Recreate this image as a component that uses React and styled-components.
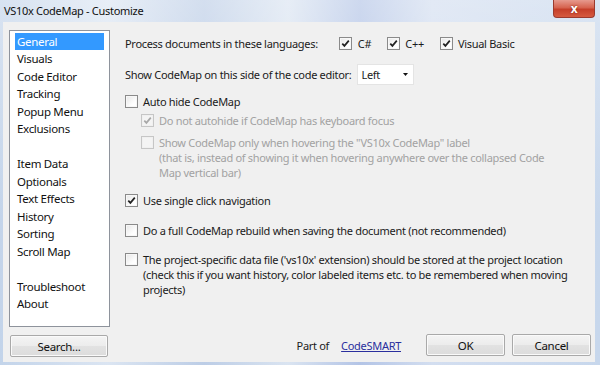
import React from 'react';
import styled, { createGlobalStyle } from 'styled-components';

const GlobalStyle = createGlobalStyle`
  html, body {
    margin: 0;
    padding: 0;
  }
  body {
    width: 600px;
    height: 365px;
    overflow: hidden;
    font-family: "Noto Sans", "Segoe UI", sans-serif;
    font-size: 11px;
    letter-spacing: -0.3px;
    color: #1b1b1b;
  }
`;

const Window = styled.div`
  width: 600px;
  height: 365px;
  box-sizing: border-box;
  display: flex;
  flex-direction: column;
  padding: 0 5px 3px 3px;
  background:
    linear-gradient(180deg, rgba(255, 255, 255, 0.35) 0%, rgba(255, 255, 255, 0) 60%),
    linear-gradient(90deg, #c3d4ea 0%, #dbe5f2 18%, #bccde6 34%, #dae4f1 48%, #b3c4e6 60%, #d3def0 72%, #c7d7ec 100%);
`;

const TitleBar = styled.div`
  height: 22px;
  display: flex;
  align-items: flex-start;
`;

const Title = styled.div`
  padding: 3px 0 0 1px;
  font-size: 11px;
  letter-spacing: -0.3px;
  color: #111;
`;

const CloseButton = styled.div`
  margin-left: auto;
  width: 42px;
  height: 18px;
  box-sizing: border-box;
  display: flex;
  align-items: center;
  justify-content: center;
  border: 1px solid #9b3a2e;
  border-top: none;
  border-radius: 0 0 4px 4px;
  background: linear-gradient(180deg, #e69a8e 0%, #d6634f 45%, #c53f2a 55%, #d65a40 100%);
  color: #fff;
  font-weight: bold;
  font-size: 12px;
  text-shadow: 0 0 2px #7a1a10;
`;

const Client = styled.div`
  flex: 1;
  display: flex;
  background: #f0f0f0;
`;

const Sidebar = styled.div`
  display: flex;
  flex-direction: column;
  padding: 8px 0 0 6px;
`;

const ListBox = styled.div`
  width: 101px;
  height: 297px;
  box-sizing: border-box;
  border: 1px solid #8e939c;
  background: #fff;
  padding: 1.5px 5px;
`;

const ListItem = styled.div`
  height: 17.5px;
  line-height: 17px;
  padding-left: 2px;
  font-size: 11.5px;
  color: ${(p) => (p.$selected ? '#fff' : '#111')};
  background: ${(p) => (p.$selected ? '#3399ff' : 'transparent')};
`;

const Button = styled.div`
  width: ${(p) => p.$width || 79}px;
  height: 22px;
  box-sizing: border-box;
  display: flex;
  align-items: center;
  justify-content: center;
  border: 1px solid #a9a9a9;
  border-radius: 2px;
  background: linear-gradient(180deg, #f4f4f4 0%, #ececec 50%, #e2e2e2 51%, #dcdcdc 100%);
  box-shadow: inset 0 0 0 1px #fafafa;
  font-size: 11.5px;
  color: #111;
`;

const SearchButton = styled(Button)`
  margin: 8px 0 0 1px;
`;

const Main = styled.div`
  flex: 1;
  display: flex;
  flex-direction: column;
  padding: 14px 4px 6px 15px;
`;

const Row = styled.div`
  display: flex;
  align-items: ${(p) => (p.$center ? 'center' : 'flex-start')};
  margin-top: ${(p) => p.$mt || 0}px;
  padding-left: ${(p) => p.$indent || 0}px;
  color: ${(p) => (p.$disabled ? '#a2a2a2' : 'inherit')};
`;

const Text = styled.div`
  line-height: 15px;
  white-space: nowrap;
  margin-left: ${(p) => p.$ml || 0}px;
  margin-right: ${(p) => p.$mr || 0}px;
`;

const Box = styled.span`
  flex: none;
  width: 13px;
  height: 13px;
  margin-top: 1px;
  box-sizing: border-box;
  display: flex;
  align-items: center;
  justify-content: center;
  border: 1px solid ${(p) => (p.$disabled ? '#c6c6c6' : '#8a8a8a')};
  background: ${(p) => (p.$disabled ? '#f4f4f4' : 'linear-gradient(135deg, #e6e6e6 0%, #ffffff 70%)')};
  box-shadow: inset 0 0 0 1px ${(p) => (p.$disabled ? '#f0f0f0' : '#f7f7f7')};
`;

const Option = styled.div`
  display: flex;
  align-items: flex-start;
  margin-right: ${(p) => p.$mr || 0}px;
`;

const Select = styled.div`
  width: 57px;
  height: 21px;
  box-sizing: border-box;
  display: flex;
  align-items: center;
  justify-content: space-between;
  padding: 0 5px 0 3px;
  background: #fff;
  border: 1px solid #e4e4e4;
`;

const Footer = styled.div`
  margin-top: auto;
  display: flex;
  align-items: center;
  justify-content: flex-end;
`;

const Link = styled.span`
  margin-left: 12px;
  color: #2a2f9e;
  text-decoration: underline;
`;

const FooterButton = styled(Button)`
  margin-left: ${(p) => p.$ml || 0}px;
`;

const Checkbox = ({ checked, disabled }) => (
  <Box $disabled={disabled}>
    {checked && (
      <svg width="9" height="9" viewBox="0 0 9 9">
        <path
          d="M1.3 4.6 L3.4 6.9 L7.8 1.6"
          fill="none"
          stroke={disabled ? '#a8a8a8' : '#222'}
          strokeWidth="1.7"
        />
      </svg>
    )}
  </Box>
);

const items = [
  'General', 'Visuals', 'Code Editor', 'Tracking', 'Popup Menu', 'Exclusions', '',
  'Item Data', 'Optionals', 'Text Effects', 'History', 'Sorting', 'Scroll Map', '',
  'Troubleshoot', 'About',
];

const App = () => (
  <Window>
    <GlobalStyle />
    <TitleBar>
      <Title>VS10x CodeMap - Customize</Title>
      <CloseButton>x</CloseButton>
    </TitleBar>
    <Client>
      <Sidebar>
        <ListBox>
          {items.map((item, i) => (
            <ListItem key={i} $selected={i === 0}>{item}</ListItem>
          ))}
        </ListBox>
        <SearchButton $width={98}>Search...</SearchButton>
      </Sidebar>

      <Main>
        <Row>
          <Text $mr={21}>Process documents in these languages:</Text>
          <Option $mr={16}>
            <Checkbox checked />
            <Text $ml={6}>C#</Text>
          </Option>
          <Option $mr={16}>
            <Checkbox checked />
            <Text $ml={5}>C++</Text>
          </Option>
          <Option>
            <Checkbox checked />
            <Text $ml={5}>Visual Basic</Text>
          </Option>
        </Row>

        <Row $mt={13} $center>
          <Text $mr={6}>Show CodeMap on this side of the code editor:</Text>
          <Select>
            <span>Left</span>
            <svg width="5" height="3" viewBox="0 0 5 3">
              <path d="M0 0 L5 0 L2.5 3 Z" fill="#111" />
            </svg>
          </Select>
        </Row>

        <Row $mt={9}>
          <Checkbox />
          <Text $ml={5}>Auto hide CodeMap</Text>
        </Row>

        <Row $mt={4} $indent={16} $disabled>
          <Checkbox checked disabled />
          <Text $ml={5}>Do not autohide if CodeMap has keyboard focus</Text>
        </Row>

        <Row $mt={7} $indent={16} $disabled>
          <Checkbox disabled />
          <Text $ml={5}>
            Show CodeMap only when hovering the "VS10x CodeMap" label<br />
            (that is, instead of showing it when hovering anywhere over the collapsed Code<br />
            Map vertical bar)
          </Text>
        </Row>

        <Row $mt={13}>
          <Checkbox checked />
          <Text $ml={5}>Use single click navigation</Text>
        </Row>

        <Row $mt={15}>
          <Checkbox />
          <Text $ml={5}>Do a full CodeMap rebuild when saving the document (not recommended)</Text>
        </Row>

        <Row $mt={14}>
          <Checkbox />
          <Text $ml={5}>
            The project-specific data file ('vs10x' extension) should be stored at the project location<br />
            (check this if you want history, color labeled items etc. to be remembered when moving<br />
            projects)
          </Text>
        </Row>

        <Footer>
          <span>Part of</span>
          <Link>CodeSMART</Link>
          <FooterButton $ml={25}>OK</FooterButton>
          <FooterButton $ml={7}>Cancel</FooterButton>
        </Footer>
      </Main>
    </Client>
  </Window>
);

export default App;
